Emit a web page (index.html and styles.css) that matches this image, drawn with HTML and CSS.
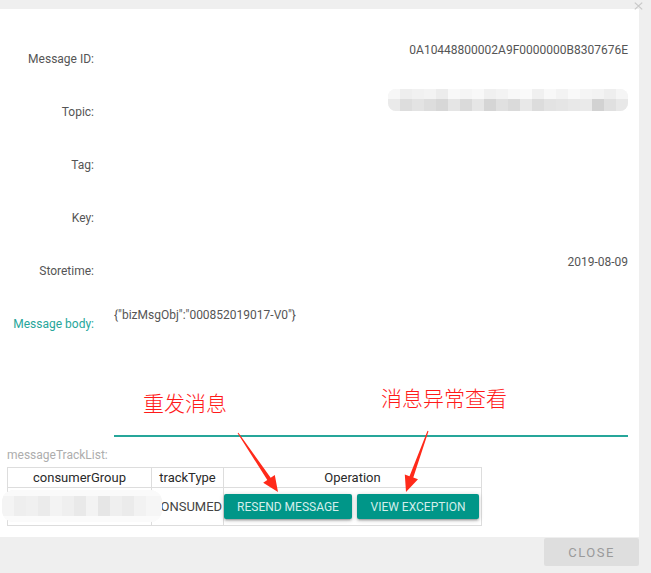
FILE: index.html
```html
<!DOCTYPE html>
<html>
<head>
<meta charset="utf-8">
<link rel="stylesheet" href="styles.css">
</head>
<body>
<div class="page">
  <div class="modal">
    <div class="content">
      <div class="row">
        <div class="label">Message ID:</div>
        <div class="value right">0A10448800002A9F0000000B8307676E</div>
      </div>
      <div class="row">
        <div class="label">Topic:</div>
        <div class="value right">
          <svg class="topic-blur" width="240" height="22" viewBox="0 0 240 22">
            <defs><clipPath id="tc"><rect x="0" y="0" width="240" height="22" rx="8"/></clipPath></defs>
            <g clip-path="url(#tc)">
              <rect x="0" y="0" width="240" height="22" fill="#f3f3f3"/>
              <rect x="0" y="0" width="12" height="10" fill="#f7f7f7"/><rect x="12" y="0" width="12" height="10" fill="#eeeeee"/><rect x="24" y="0" width="12" height="10" fill="#f1f1f1"/><rect x="36" y="0" width="12" height="10" fill="#f3f3f3"/><rect x="48" y="0" width="12" height="10" fill="#ececec"/><rect x="60" y="0" width="12" height="10" fill="#f8f8f8"/><rect x="72" y="0" width="12" height="10" fill="#f5f5f5"/><rect x="84" y="0" width="12" height="10" fill="#f8f8f8"/><rect x="96" y="0" width="12" height="10" fill="#f0f0f0"/><rect x="108" y="0" width="12" height="10" fill="#f3f3f3"/><rect x="120" y="0" width="12" height="10" fill="#f8f8f8"/><rect x="132" y="0" width="12" height="10" fill="#fafafa"/><rect x="144" y="0" width="12" height="10" fill="#f0f0f0"/><rect x="156" y="0" width="12" height="10" fill="#f8f8f8"/><rect x="168" y="0" width="12" height="10" fill="#f3f3f3"/><rect x="180" y="0" width="12" height="10" fill="#f9f9f9"/><rect x="192" y="0" width="12" height="10" fill="#f5f5f5"/><rect x="204" y="0" width="12" height="10" fill="#f3f3f3"/><rect x="216" y="0" width="12" height="10" fill="#eeeeee"/><rect x="228" y="0" width="12" height="10" fill="#f5f5f5"/>
              <rect x="0" y="10" width="12" height="12" fill="#eaeaea"/><rect x="12" y="10" width="12" height="12" fill="#dddddd"/><rect x="24" y="10" width="12" height="12" fill="#e3e3e3"/><rect x="36" y="10" width="12" height="12" fill="#dddddd"/><rect x="48" y="10" width="12" height="12" fill="#d7d7d7"/><rect x="60" y="10" width="12" height="12" fill="#e5e5e5"/><rect x="72" y="10" width="12" height="12" fill="#dadada"/><rect x="84" y="10" width="12" height="12" fill="#e6e6e6"/><rect x="96" y="10" width="12" height="12" fill="#d5d5d5"/><rect x="108" y="10" width="12" height="12" fill="#e0e0e0"/><rect x="120" y="10" width="12" height="12" fill="#dadada"/><rect x="132" y="10" width="12" height="12" fill="#e8e8e8"/><rect x="144" y="10" width="12" height="12" fill="#dcdcdc"/><rect x="156" y="10" width="12" height="12" fill="#e3e3e3"/><rect x="168" y="10" width="12" height="12" fill="#e5e5e5"/><rect x="180" y="10" width="12" height="12" fill="#e8e8e8"/><rect x="192" y="10" width="12" height="12" fill="#eaeaea"/><rect x="204" y="10" width="12" height="12" fill="#d2d2d2"/><rect x="216" y="10" width="12" height="12" fill="#e0e0e0"/><rect x="228" y="10" width="12" height="12" fill="#e8e8e8"/>
            </g>
          </svg>
        </div>
      </div>
      <div class="row">
        <div class="label">Tag:</div>
        <div class="value right"></div>
      </div>
      <div class="row">
        <div class="label">Key:</div>
        <div class="value right"></div>
      </div>
      <div class="row">
        <div class="label">Storetime:</div>
        <div class="value right">2019-08-09</div>
      </div>
      <div class="row body-row">
        <div class="label teal">Message body:</div>
        <div class="value body">{"bizMsgObj":"000852019017-V0"}</div>
      </div>
      <div class="track-title">messageTrackList:</div>
      <table class="track">
        <colgroup><col class="c1"><col class="c2"><col class="c3"></colgroup>
        <thead>
          <tr><th>consumerGroup</th><th>trackType</th><th>Operation</th></tr>
        </thead>
        <tbody>
          <tr>
            <td></td>
            <td class="type">CONSUMED</td>
            <td class="ops">
              <div class="ops-row">
                <button class="btn btn-resend">RESEND MESSAGE</button>
                <button class="btn btn-view">VIEW EXCEPTION</button>
              </div>
            </td>
          </tr>
        </tbody>
      </table>
    </div>
  </div>
  <div class="footer">
    <button class="close-btn">CLOSE</button>
  </div>

  <svg class="close-x" width="9" height="8" viewBox="0 0 9 8">
    <path d="M0.8 0.6 L8.2 7.4 M8.2 0.6 L0.8 7.4" stroke="#c8c8c8" stroke-width="1.2" fill="none"/>
  </svg>

  <svg class="group-blur" width="160" height="32" viewBox="0 0 160 32">
    <defs><clipPath id="gc"><rect x="0" y="0" width="160" height="32" rx="12"/></clipPath></defs>
    <g clip-path="url(#gc)">
      <rect x="0" y="0" width="160" height="32" fill="#f6f6f6"/>
      <rect x="0" y="6" width="12" height="20" fill="#f4f4f4"/><rect x="12" y="6" width="12" height="20" fill="#eeeeee"/><rect x="24" y="6" width="12" height="20" fill="#f0f0f0"/><rect x="36" y="6" width="12" height="20" fill="#ebebeb"/><rect x="48" y="6" width="12" height="20" fill="#f3f3f3"/><rect x="60" y="6" width="12" height="20" fill="#efefef"/><rect x="72" y="6" width="12" height="20" fill="#e9e9e9"/><rect x="84" y="6" width="12" height="20" fill="#f3f3f3"/><rect x="96" y="6" width="12" height="20" fill="#e6e6e6"/><rect x="108" y="6" width="12" height="20" fill="#efefef"/><rect x="120" y="6" width="12" height="20" fill="#ebebeb"/><rect x="132" y="6" width="12" height="20" fill="#f2f2f2"/><rect x="144" y="6" width="16" height="20" fill="#f6f6f6"/>
      <rect x="0" y="26" width="160" height="6" fill="#fbfbfb"/>
      <rect x="0" y="0" width="160" height="6" fill="#fafafa"/>
    </g>
  </svg>

  <div class="note note-1">重发消息</div>
  <div class="note note-2">消息异常查看</div>

  <svg class="arrows" width="651" height="573" viewBox="0 0 651 573">
    <polygon fill="#ff2a1a" points="237.6,433.3 267.3,479.9 263.2,482.7 278,492 274.8,474.9 270.7,477.7 238.4,432.7"/>
    <polygon fill="#ff2a1a" points="427.5,430.8 409.5,476.2 404.8,474.5 406,492 418,479.3 413.3,477.6 428.5,431.2"/>
  </svg>
</div>
</body>
</html>
```

FILE: styles.css
```css
* { box-sizing: border-box; }
html, body {
  margin: 0;
  padding: 0;
  background: #efefef;
}
body {
  font-family: Roboto, "Liberation Sans", Arial, sans-serif;
  font-size: 12px;
  color: #555;
}
.page {
  position: relative;
  width: 651px;
  height: 573px;
  overflow: hidden;
}
.modal {
  margin-top: 9px;
  margin-right: 12px;
  height: 528px;
  background: #ffffff;
}
.content {
  padding: 32px 11px 0 0;
}
.row {
  display: grid;
  grid-template-columns: 94px 1fr;
  column-gap: 20px;
  height: 53px;
}
.label {
  text-align: right;
  padding-top: 9px;
  line-height: 18px;
  color: #555;
}
.label.teal {
  color: #26a69a;
}
.value {
  line-height: 18px;
  color: #555;
}
.value.right {
  display: flex;
  justify-content: flex-end;
  align-items: flex-start;
}
.topic-blur {
  display: block;
  margin-top: -5px;
}
.body-row {
  height: 131px;
}
.value.body {
  height: 131px;
  border-bottom: 2px solid #26a69a;
}
.track-title {
  margin-top: 9px;
  padding-left: 7px;
  line-height: 18px;
  color: #adadad;
}
.track {
  margin: 3px 0 0 7px;
  border-collapse: collapse;
  width: 474px;
  table-layout: fixed;
}
.track col.c1 { width: 144px; }
.track col.c2 { width: 72px; }
.track col.c3 { width: 258px; }
.track th, .track td {
  border: 1px solid #dddddd;
  padding: 0;
  text-align: center;
  font-size: 13px;
}
.track th {
  height: 20px;
  font-weight: 400;
  color: #2a2a2a;
}
.track td {
  height: 38px;
  color: #444;
}
.track td.type {
  white-space: nowrap;
  overflow: hidden;
  text-align: right;
  padding-right: 1px;
}
.ops-row {
  display: flex;
  gap: 5px;
}
.btn {
  height: 25px;
  border: none;
  border-radius: 2px;
  background: #009688;
  color: #d4eeeb;
  font-family: Roboto, "Liberation Sans", Arial, sans-serif;
  font-size: 12px;
  padding: 0;
  box-shadow: 0 2px 2px 0 rgba(0,0,0,0.14), 0 3px 1px -2px rgba(0,0,0,0.12), 0 1px 5px 0 rgba(0,0,0,0.2);
}
.btn-resend { width: 128px; }
.btn-view { width: 122px; }
.footer {
  height: 36px;
  display: flex;
  justify-content: flex-end;
  padding: 1px 12px 0 0;
}
.close-btn {
  width: 95px;
  height: 28px;
  border: none;
  border-radius: 2px;
  background: #dedede;
  color: #9a9a9a;
  font-family: Roboto, "Liberation Sans", Arial, sans-serif;
  font-size: 13px;
  letter-spacing: 1.5px;
  padding: 0;
}
.close-x {
  position: absolute;
  top: 2px;
  left: 634px;
}
.group-blur {
  position: absolute;
  left: 2px;
  top: 490px;
}
.note {
  position: absolute;
  font-family: "Noto Sans CJK SC", sans-serif;
  font-size: 21px;
  font-weight: 300;
  line-height: 24px;
  color: #ff1a1a;
  white-space: nowrap;
}
.note-1 { left: 143px; top: 390px; }
.note-2 { left: 381px; top: 385px; }
.arrows {
  position: absolute;
  left: 0;
  top: 0;
  pointer-events: none;
}
```
